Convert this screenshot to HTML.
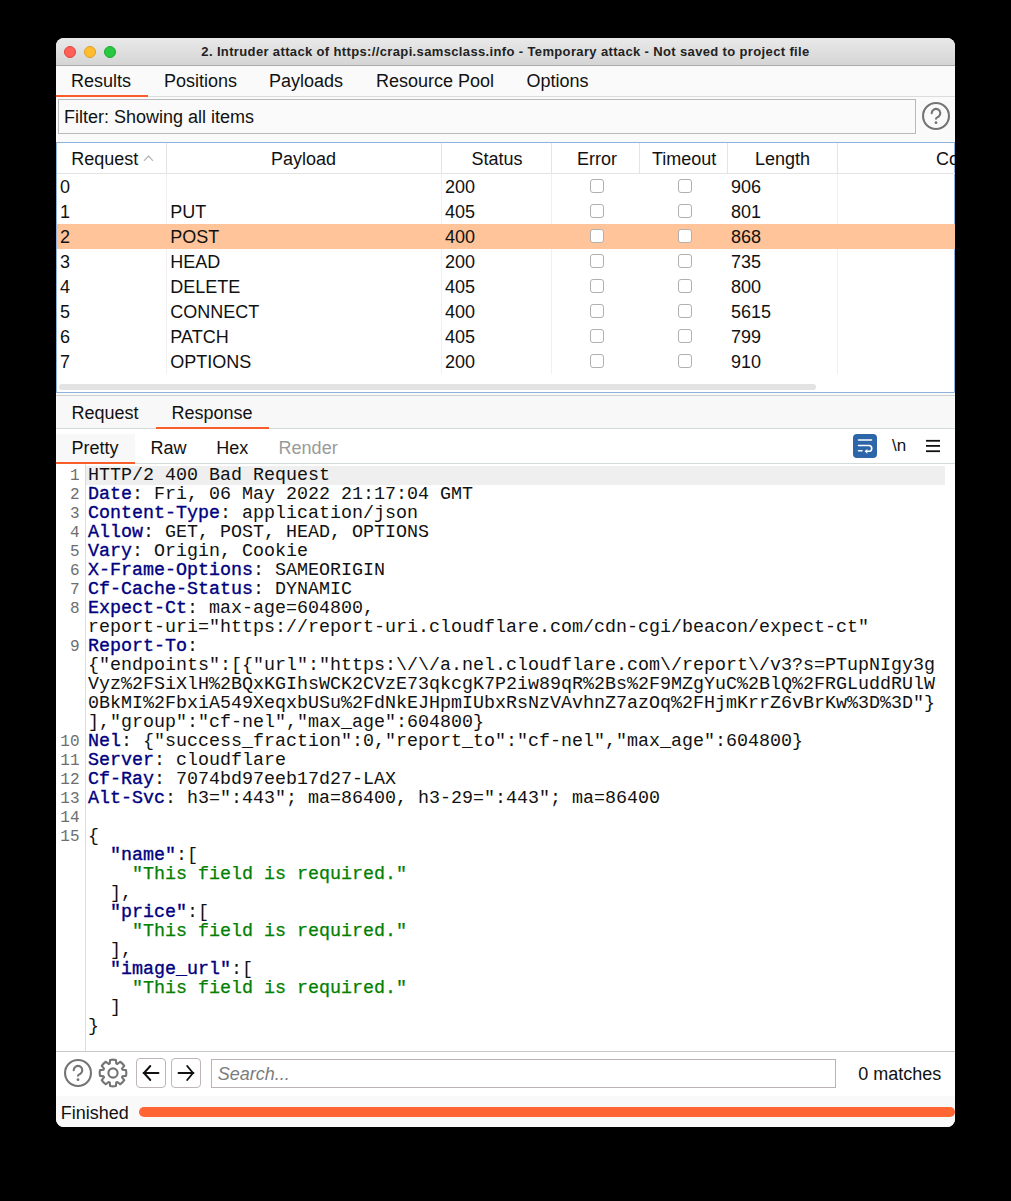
<!DOCTYPE html>
<html><head><meta charset="utf-8">
<style>
*{box-sizing:border-box;margin:0;padding:0}
html,body{width:1011px;height:1201px;background:#000;overflow:hidden}
body{position:relative;font-family:"Liberation Sans",sans-serif;color:#111}
.a{position:absolute}
.t{position:absolute;white-space:pre;font-size:18px;line-height:18px}
#win{position:absolute;left:0;top:0;width:1011px;height:1201px;clip-path:inset(38px 56px 74px 56px round 8px)}
#bg{position:absolute;left:56px;top:38px;width:899px;height:1089px;background:#fafafa}
#title{position:absolute;left:56px;top:38px;width:899px;height:28px;background:linear-gradient(#e9e9e9,#d5d5d5);border-bottom:1px solid #aaa}
.tl{position:absolute;top:46px;width:12px;height:12px;border-radius:50%}
#ttext{position:absolute;left:56px;top:43.8px;width:899px;text-align:center;font-weight:bold;font-size:13px;letter-spacing:0.36px;line-height:15px;color:#222;white-space:pre}
.cb{position:absolute;width:14px;height:14px;border:1.2px solid #b0b0b0;border-radius:3px;background:#fff}
.code{position:absolute;left:88px;top:466px;font-family:"Liberation Mono",monospace;font-size:18.33px;line-height:19px;white-space:pre;color:#111}
.ln{position:absolute;left:56px;top:467px;width:23.5px;text-align:right;font-family:"Liberation Mono",monospace;font-size:16px;line-height:19px;color:#6e6e6e;white-space:pre}
.k{color:#000080;-webkit-text-stroke:0.35px #000080}
.g{color:#008000;-webkit-text-stroke:0.25px #008000}
.vl{position:absolute;width:1px;background:#e3e3e3}
.hl{position:absolute;height:1px;background:#e3e3e3}
</style></head><body>
<div id="win">
  <div id="bg"></div>
  <div id="title"></div>
  <div class="tl" style="left:64px;background:#fe5f57;border:1px solid #e1443f"></div>
  <div class="tl" style="left:84px;background:#febc2e;border:1px solid #dea123"></div>
  <div class="tl" style="left:104px;background:#28c840;border:1px solid #1dac2c"></div>
  <div id="ttext">2. Intruder attack of https://crapi.samsclass.info - Temporary attack - Not saved to project file</div>

  <!-- tab bar -->
  <div class="a" style="left:56px;top:96px;width:899px;height:1px;background:#dcdcdc"></div>
  <div class="a" style="left:56px;top:95px;width:92px;height:2px;background:#f95d2a"></div>
  <div class="t" style="left:71px;top:72px">Results</div>
  <div class="t" style="left:164px;top:72px">Positions</div>
  <div class="t" style="left:269px;top:72px">Payloads</div>
  <div class="t" style="left:376px;top:72px">Resource Pool</div>
  <div class="t" style="left:526.4px;top:72px">Options</div>

  <!-- filter -->
  <div class="a" style="left:58px;top:99px;width:858px;height:35px;border:1px solid #b9b9b9;background:#fafafa"></div>
  <div class="t" style="left:64px;top:108px">Filter: Showing all items</div>
  <svg class="a" style="left:921.6px;top:102.4px" width="28" height="28" viewBox="0 0 28 28"><circle cx="14" cy="14" r="12.95" fill="none" stroke="#747474" stroke-width="2.1"/><path d="M9.7,11.3 A4.3,4.3 0 1 1 16.6,14.6 C15,15.6 14,16 14,16.8" fill="none" stroke="#747474" stroke-width="2.1" stroke-linecap="round"/><circle cx="14" cy="20.7" r="1.4" fill="#747474"/></svg>

  <!-- table -->
  <div class="a" style="left:56px;top:142px;width:899px;height:251px;background:#fff;border:1px solid #8fb2dc"></div>
<div class="hl" style="left:57px;top:173px;width:898px;background:#e4e4e4"></div>
<div class="vl" style="left:166px;top:143px;height:31px;background:#e4e4e4"></div>
<div class="vl" style="left:166px;top:174px;height:200px;background:#f0f0f0"></div>
<div class="vl" style="left:441px;top:143px;height:31px;background:#e4e4e4"></div>
<div class="vl" style="left:441px;top:174px;height:200px;background:#f0f0f0"></div>
<div class="vl" style="left:551px;top:143px;height:31px;background:#e4e4e4"></div>
<div class="vl" style="left:551px;top:174px;height:200px;background:#f0f0f0"></div>
<div class="vl" style="left:639px;top:143px;height:31px;background:#e4e4e4"></div>

<div class="vl" style="left:727px;top:143px;height:31px;background:#e4e4e4"></div>

<div class="vl" style="left:837px;top:143px;height:31px;background:#e4e4e4"></div>
<div class="vl" style="left:837px;top:174px;height:200px;background:#f0f0f0"></div>
<div class="t" style="left:71.2px;top:149.76px;">Request</div>
<svg class="a" style="left:143px;top:153px" width="11" height="8" viewBox="0 0 11 8"><polyline points="1,7.8 5.5,3 10,7.8" fill="none" stroke="#b4b4b4" stroke-width="1.2"/></svg>
<div class="t" style="left:271px;top:149.76px;">Payload</div>
<div class="t" style="left:471.5px;top:149.76px;">Status</div>
<div class="t" style="left:577px;top:149.76px;">Error</div>
<div class="t" style="left:652px;top:149.76px;">Timeout</div>
<div class="t" style="left:755px;top:149.76px;">Length</div>
<div class="t" style="left:936px;top:149.76px;">Column</div>
<div class="t" style="left:60px;top:177.56px;">0</div>
<div class="t" style="left:445px;top:177.56px;">200</div>
<div class="t" style="left:731px;top:177.56px;">906</div>
<div class="cb" style="left:590px;top:178.5px"></div>
<div class="cb" style="left:678px;top:178.5px"></div>
<div class="t" style="left:60px;top:202.56px;">1</div>
<div class="t" style="left:170.3px;top:202.56px;">PUT</div>
<div class="t" style="left:445px;top:202.56px;">405</div>
<div class="t" style="left:731px;top:202.56px;">801</div>
<div class="cb" style="left:590px;top:203.5px"></div>
<div class="cb" style="left:678px;top:203.5px"></div>
<div class="a" style="left:57px;top:224px;width:898px;height:25px;background:#ffc499"></div>
<div class="t" style="left:60px;top:227.56px;">2</div>
<div class="t" style="left:170.3px;top:227.56px;">POST</div>
<div class="t" style="left:445px;top:227.56px;">400</div>
<div class="t" style="left:731px;top:227.56px;">868</div>
<div class="cb" style="left:590px;top:228.5px"></div>
<div class="cb" style="left:678px;top:228.5px"></div>
<div class="t" style="left:60px;top:252.56px;">3</div>
<div class="t" style="left:170.3px;top:252.56px;">HEAD</div>
<div class="t" style="left:445px;top:252.56px;">200</div>
<div class="t" style="left:731px;top:252.56px;">735</div>
<div class="cb" style="left:590px;top:253.5px"></div>
<div class="cb" style="left:678px;top:253.5px"></div>
<div class="t" style="left:60px;top:277.56px;">4</div>
<div class="t" style="left:170.3px;top:277.56px;">DELETE</div>
<div class="t" style="left:445px;top:277.56px;">405</div>
<div class="t" style="left:731px;top:277.56px;">800</div>
<div class="cb" style="left:590px;top:278.5px"></div>
<div class="cb" style="left:678px;top:278.5px"></div>
<div class="t" style="left:60px;top:302.56px;">5</div>
<div class="t" style="left:170.3px;top:302.56px;">CONNECT</div>
<div class="t" style="left:445px;top:302.56px;">400</div>
<div class="t" style="left:731px;top:302.56px;">5615</div>
<div class="cb" style="left:590px;top:303.5px"></div>
<div class="cb" style="left:678px;top:303.5px"></div>
<div class="t" style="left:60px;top:327.56px;">6</div>
<div class="t" style="left:170.3px;top:327.56px;">PATCH</div>
<div class="t" style="left:445px;top:327.56px;">405</div>
<div class="t" style="left:731px;top:327.56px;">799</div>
<div class="cb" style="left:590px;top:328.5px"></div>
<div class="cb" style="left:678px;top:328.5px"></div>
<div class="t" style="left:60px;top:352.56px;">7</div>
<div class="t" style="left:170.3px;top:352.56px;">OPTIONS</div>
<div class="t" style="left:445px;top:352.56px;">200</div>
<div class="t" style="left:731px;top:352.56px;">910</div>
<div class="cb" style="left:590px;top:353.5px"></div>
<div class="cb" style="left:678px;top:353.5px"></div>
<div class="a" style="left:59px;top:384px;width:757px;height:6px;border-radius:3px;background:#e3e3e3"></div>

  <!-- separator between table and lower panel -->
  <div class="a" style="left:56px;top:393px;width:899px;height:3px;background:#fafafa"></div>
  <div class="a" style="left:56px;top:395px;width:899px;height:1px;background:#cfcfcf"></div>
  <div class="a" style="left:56px;top:396px;width:899px;height:33px;background:#f8f8f8"></div>
  <div class="a" style="left:56px;top:428px;width:899px;height:1px;background:#d3dada"></div>
  <div class="a" style="left:156px;top:427px;width:113px;height:2px;background:#f95d2a"></div>
  <div class="t" style="left:71.4px;top:404.3px">Request</div>
  <div class="t" style="left:171.5px;top:404.3px">Response</div>
  <div class="a" style="left:56px;top:429px;width:899px;height:34px;background:#fff"></div>
  <div class="a" style="left:56px;top:434px;width:79px;height:28px;background:#f8f8f8"></div>
  <div class="a" style="left:56px;top:463px;width:899px;height:1px;background:#d3dada"></div>
  <div class="a" style="left:56px;top:462px;width:79px;height:2px;background:#f95d2a"></div>
  <div class="t" style="left:71.4px;top:438.8px">Pretty</div>
  <div class="t" style="left:150.4px;top:438.8px">Raw</div>
  <div class="t" style="left:216.2px;top:438.8px">Hex</div>
  <div class="t" style="left:278.6px;top:438.8px;color:#9a9a9a">Render</div>
  <div class="a" style="left:853px;top:434px;width:24px;height:24px;border-radius:4px;background:#2c65a8"></div>
  <svg class="a" style="left:853px;top:434px" width="24" height="24" viewBox="0 0 24 24">
    <g stroke="#fff" stroke-width="1.6" fill="none" stroke-linecap="round">
      <line x1="5.5" y1="6" x2="18.5" y2="6"/>
      <path d="M5.5 11.5 H16.5 A3 3 0 0 1 16.5 17.3 H13"/>
      <line x1="5.5" y1="16.8" x2="9" y2="16.8"/>
    </g>
    <path d="M11.6 17.3 L14.4 14.9 L14.4 19.7 Z" fill="#fff"/>
  </svg>
  <div class="t" style="left:892px;top:437.3px;font-size:17px">\n</div>
  <svg class="a" style="left:926px;top:439px" width="14" height="14" viewBox="0 0 14 14">
    <g stroke="#111" stroke-width="1.8"><line x1="0" y1="1.8" x2="14" y2="1.8"/><line x1="0" y1="6.9" x2="14" y2="6.9"/><line x1="0" y1="12.2" x2="14" y2="12.2"/></g>
  </svg>
  <!-- code area -->
  <div class="a" style="left:56px;top:464px;width:899px;height:588px;background:#fff"></div>
  <div class="a" style="left:85px;top:464px;width:1px;height:588px;background:#dcdcdc"></div>
  <div class="a" style="left:86px;top:466px;width:859px;height:19px;background:#efefef"></div>

<div class="ln">1
2
3
4
5
6
7
8

9




10
11
12
13
14
15









</div>
<div class="code">HTTP/2 400 Bad Request
<span class="k">Date</span>: Fri, 06 May 2022 21:17:04 GMT
<span class="k">Content-Type</span>: application/json
<span class="k">Allow</span>: GET, POST, HEAD, OPTIONS
<span class="k">Vary</span>: Origin, Cookie
<span class="k">X-Frame-Options</span>: SAMEORIGIN
<span class="k">Cf-Cache-Status</span>: DYNAMIC
<span class="k">Expect-Ct</span>: max-age=604800,
report-uri="https://report-uri.cloudflare.com/cdn-cgi/beacon/expect-ct"
<span class="k">Report-To</span>:
{"endpoints":[{"url":"https:\/\/a.nel.cloudflare.com\/report\/v3?s=PTupNIgy3g
Vyz%2FSiXlH%2BQxKGIhsWCK2CVzE73qkcgK7P2iw89qR%2Bs%2F9MZgYuC%2BlQ%2FRGLuddRUlW
0BkMI%2FbxiA549XeqxbUSu%2FdNkEJHpmIUbxRsNzVAvhnZ7azOq%2FHjmKrrZ6vBrKw%3D%3D"}
],"group":"cf-nel","max_age":604800}
<span class="k">Nel</span>: {"success_fraction":0,"report_to":"cf-nel","max_age":604800}
<span class="k">Server</span>: cloudflare
<span class="k">Cf-Ray</span>: 7074bd97eeb17d27-LAX
<span class="k">Alt-Svc</span>: h3=":443"; ma=86400, h3-29=":443"; ma=86400

{
  <span class="k">"name"</span>:[
    <span class="g">"This field is required."</span>
  ],
  <span class="k">"price"</span>:[
    <span class="g">"This field is required."</span>
  ],
  <span class="k">"image_url"</span>:[
    <span class="g">"This field is required."</span>
  ]
}</div>

  <!-- bottom bar -->
  <div class="a" style="left:56px;top:1051px;width:899px;height:1px;background:#c9c9c9"></div>
  <div class="a" style="left:56px;top:1052px;width:899px;height:44px;background:#fff"></div>
  <svg class="a" style="left:64.4px;top:1059.4px" width="28" height="28" viewBox="0 0 28 28"><circle cx="14" cy="14" r="12.95" fill="none" stroke="#747474" stroke-width="2.1"/><path d="M9.7,11.3 A4.3,4.3 0 1 1 16.6,14.6 C15,15.6 14,16 14,16.8" fill="none" stroke="#747474" stroke-width="2.1" stroke-linecap="round"/><circle cx="14" cy="20.7" r="1.4" fill="#747474"/></svg>
  <svg class="a" style="left:98.4px;top:1058.4px" width="30" height="30" viewBox="0 0 30 30"><path d="M24.46,11.74 L28.03,12.11 A13.35,13.35 0 0 1 28.03,17.89 L24.46,18.26 A10.0,10.0 0 0 1 23.99,19.38 L26.26,22.17 A13.35,13.35 0 0 1 22.17,26.26 L19.38,23.99 A10.0,10.0 0 0 1 18.26,24.46 L17.89,28.03 A13.35,13.35 0 0 1 12.11,28.03 L11.74,24.46 A10.0,10.0 0 0 1 10.62,23.99 L7.83,26.26 A13.35,13.35 0 0 1 3.74,22.17 L6.01,19.38 A10.0,10.0 0 0 1 5.54,18.26 L1.97,17.89 A13.35,13.35 0 0 1 1.97,12.11 L5.54,11.74 A10.0,10.0 0 0 1 6.01,10.62 L3.74,7.83 A13.35,13.35 0 0 1 7.83,3.74 L10.62,6.01 A10.0,10.0 0 0 1 11.74,5.54 L12.11,1.97 A13.35,13.35 0 0 1 17.89,1.97 L18.26,5.54 A10.0,10.0 0 0 1 19.38,6.01 L22.17,3.74 A13.35,13.35 0 0 1 26.26,7.83 L23.99,10.62 A10.0,10.0 0 0 1 24.46,11.74 Z" fill="none" stroke="#747474" stroke-width="2.1" stroke-linejoin="round"/><circle cx="15" cy="15" r="4.6" fill="none" stroke="#747474" stroke-width="2.1"/></svg>
  <div class="a" style="left:136px;top:1058px;width:30px;height:30px;border:1px solid #bfb6b6;border-radius:4px;background:#fff"></div>
  <div class="a" style="left:171px;top:1058px;width:30px;height:30px;border:1px solid #bfb6b6;border-radius:4px;background:#fff"></div>
  <svg class="a" style="left:136px;top:1058px" width="30" height="30" viewBox="0 0 30 30"><g stroke="#111" stroke-width="1.9" fill="none" stroke-linecap="round" stroke-linejoin="round"><line x1="7.5" y1="15" x2="22.5" y2="15"/><polyline points="14.3,8 8,15 14.3,22"/></g></svg>
  <svg class="a" style="left:171px;top:1058px" width="30" height="30" viewBox="0 0 30 30"><g stroke="#111" stroke-width="1.9" fill="none" stroke-linecap="round" stroke-linejoin="round"><line x1="7.5" y1="15" x2="22.5" y2="15"/><polyline points="16.2,8 22,15 16.2,22"/></g></svg>
  <div class="a" style="left:211px;top:1059px;width:625px;height:29px;border:1px solid #bbb3b3;background:#fff"></div>
  <div class="t" style="left:217.8px;top:1065px;font-style:italic;color:#7d7d7d">Search...</div>
  <div class="t" style="left:858.3px;top:1065.2px">0 matches</div>
  <!-- status bar -->
  <div class="a" style="left:56px;top:1096px;width:899px;height:31px;background:#f9f9f9"></div>
  <div class="t" style="left:60.8px;top:1104px">Finished</div>
  <div class="a" style="left:139px;top:1107px;width:816px;height:10px;border-radius:5px;background:#ff6633"></div>

</div>
</body></html>
